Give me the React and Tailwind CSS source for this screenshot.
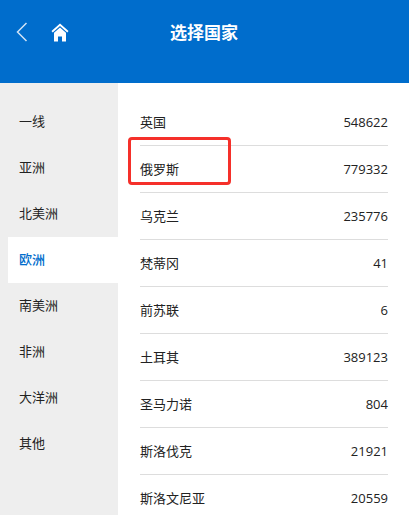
const regions = ["一线", "亚洲", "北美洲", "欧洲", "南美洲", "非洲", "大洋洲", "其他"];
const rows = [
  ["英国", "548622"],
  ["俄罗斯", "779332"],
  ["乌克兰", "235776"],
  ["梵蒂冈", "41"],
  ["前苏联", "6"],
  ["土耳其", "389123"],
  ["圣马力诺", "804"],
  ["斯洛伐克", "21921"],
  ["斯洛文尼亚", "20559"],
];

export default function App() {
  return (
    <div className="relative h-[515px] w-[409px] overflow-hidden bg-white text-[13px] text-[#222] font-['Open_Sans','Noto_Sans_CJK_SC',sans-serif]">
      <header className="flex h-[83px] items-start bg-[#006dcc] text-white">
        <div className="flex h-[64px] w-[118px] items-center">
          <svg className="ml-[15px]" width="13" height="20" viewBox="0 0 13 20" fill="none" stroke="#cfe3f6" strokeWidth="1.5">
            <path d="M11.5 1 L2.5 10 L11.5 19" />
          </svg>
          <svg className="ml-[23px]" width="18" height="19" viewBox="0 0 18 19" fill="white">
            <path d="M9 0.5 L17.5 8 L16.3 9.4 L9 3 L1.7 9.4 L0.5 8 Z" />
            <path d="M9 4.6 L15 9.8 V18.5 H11 V13.5 H7 V18.5 H3 V9.8 Z" />
          </svg>
        </div>
        <h1 className="flex h-[64px] w-[172px] items-center pl-[52px] pt-[2px] text-[17px] font-bold whitespace-nowrap">选择国家</h1>
      </header>
      <div className="flex h-[432px]">
        <nav className="w-[118px] bg-[#eeeeee] pt-4 pl-2">
          {regions.map((r) => (
            <div key={r} className={`flex h-[46px] items-center pl-[11px] ${r === "欧洲" ? "bg-white font-medium text-[#006dcc]" : ""}`}>
              {r}
            </div>
          ))}
        </nav>
        <main className="flex-1 pt-4 pl-[22px] pr-[21px]">
          {rows.map(([n, v]) => (
            <div key={n} className="flex h-[47px] items-center justify-between border-b border-[#dddddd] pt-[1px] last:border-b-0">
              <span>{n}</span>
              <span>{v}</span>
            </div>
          ))}
        </main>
      </div>
      <div className="absolute left-[128px] top-[137px] h-[48px] w-[103px] rounded-[4px] border-[3px] border-[#f5302a]" />
    </div>
  );
}
